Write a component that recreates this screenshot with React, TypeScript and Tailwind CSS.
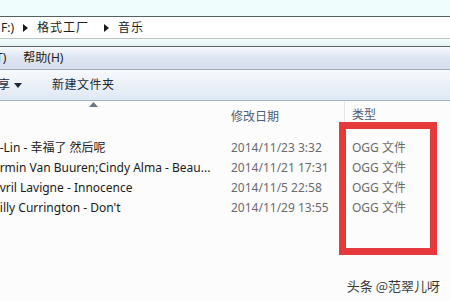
const font = "font-['Segoe_UI','Noto_Sans','Noto_Sans_CJK_SC',sans-serif]";

const rows = [
  { name: "A-Lin - 幸福了 然后呢", date: "2014/11/23 3:32" },
  { name: "Armin Van Buuren;Cindy Alma - Beau...", date: "2014/11/21 17:31" },
  { name: "Avril Lavigne - Innocence", date: "2014/11/5 22:58" },
  { name: "Billy Currington - Don't", date: "2014/11/29 13:55" },
];

const Arrow = () => (
  <svg width="5" height="8" viewBox="0 0 5 8" className="mx-[9px]">
    <path d="M0 0 L5 4 L0 8 Z" fill="#1a1a1a" />
  </svg>
);

export default function App() {
  return (
    <div
      className={`relative w-[450px] h-[301px] overflow-hidden bg-[#fcfcfc] text-[12px] ${font}`}
    >
      {/* title strip */}
      <div className="h-[17px] bg-[#effdfd] border-b border-[#56625f]" />

      {/* address bar */}
      <div className="h-[22px] bg-white border-b border-[#bcc3c2] flex items-center text-[#1c1c1c]">
        <span className="ml-[1px]">F:)</span>
        <Arrow />
        <span className="tracking-[1px]">格式工厂</span>
        <span className="w-[6px]" />
        <Arrow />
        <span className="tracking-[1px]">音乐</span>
      </div>

      {/* gap band */}
      <div className="h-[8px] bg-gradient-to-b from-[#f2fbfb] to-[#e6f4f4] border-b border-[#5d6866]" />

      {/* menu bar */}
      <div className="h-[23px] bg-gradient-to-b from-[#f7f9fc] via-[#dce4f1] to-[#d9dff0] border-b border-[#a3aab3] flex items-center text-[#1c1c1c]">
        <span className="ml-[-4px]">T)</span>
        <span className="ml-[17px]">帮助(H)</span>
      </div>

      {/* toolbar */}
      <div className="h-[31px] bg-gradient-to-b from-[#f6f9fd] to-[#dfe8f3] border-b border-[#a5b2c0] flex items-center text-[#1e2a3a]">
        <span className="ml-[-2px]">享</span>
        <svg width="8" height="5" viewBox="0 0 8 5" className="ml-[4px]">
          <path d="M0 0 H8 L4 5 Z" fill="#1e2a3a" />
        </svg>
        <span className="ml-[30px] tracking-[0.5px]">新建文件夹</span>
      </div>

      {/* column header */}
      <div className="relative h-[30px] flex text-[#4c607a]">
        <div className="w-[225px] flex justify-center pt-[1px]">
          <svg width="9" height="5" viewBox="0 0 9 5" className="ml-[-38px]">
            <path d="M0 5 L4.5 0 L9 5 Z" fill="#6d7785" />
          </svg>
        </div>
        <div className="w-[119px] pl-[6px] pt-[7px]">修改日期</div>
        <div className="border-l border-[#e2e6ea] h-[22px]" />
        <div className="pl-[7px] pt-[5px]">类型</div>
      </div>

      {/* rows */}
      <div className="flex flex-col pt-[7px]">
        {rows.map((r) => (
          <div key={r.date} className="h-[20px] flex items-center">
            <div className="w-[231px] shrink-0 overflow-hidden">
              <div className="ml-[-8px] whitespace-nowrap text-[#1b1b1b]">{r.name}</div>
            </div>
            <div className="w-[121px] shrink-0 text-[#6b6b6b]">{r.date}</div>
            <div className="text-[#6b6b6b]">OGG 文件</div>
          </div>
        ))}
      </div>

      {/* red annotation box */}
      <div className="absolute left-[339px] top-[122px] w-[98px] h-[133px] border-[7px] border-[#e5393a]" />

      {/* watermark */}
      <div className="absolute right-[10px] top-[276px] text-[13px] text-[#3a3a3a] font-['Noto_Sans_CJK_SC',sans-serif]">
        头条 @范翠儿呀
      </div>
    </div>
  );
}
